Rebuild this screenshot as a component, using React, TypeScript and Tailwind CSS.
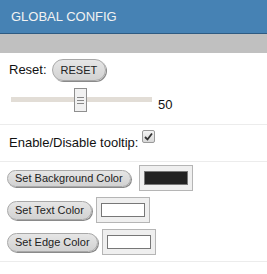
import React, { useState } from "react";

const font = { fontFamily: '"Liberation Sans", Arial, sans-serif' };

const PillButton: React.FC<{ label: string; className?: string }> = ({ label, className }) => (
  <button
    className={`rounded-full border border-[#a8a8a8] bg-gradient-to-b from-[#e6e6e6] to-[#d2d2d2] px-[7px] text-[11px] leading-none text-[#222] shadow-[1px_1px_0_#8a8a8a] ${className ?? ""}`}
  >
    {label}
  </button>
);

const ColorBox: React.FC<{ color: string }> = ({ color }) => (
  <div className="flex h-[26px] w-[54px] items-center justify-center border border-[#b5b5b5] bg-[#efefef]">
    <div className="h-[14px] w-[44px] border border-[#777]" style={{ background: color }} />
  </div>
);

const App: React.FC = () => {
  const [value] = useState(50);

  return (
    <div className="h-[274px] w-[267px] overflow-hidden bg-white text-[#111]" style={font}>
      {/* Header */}
      <div className="flex h-[34px] items-center border-b border-[#2e5b82] bg-[#4682b4] pl-[11px] text-[13px] text-[#f2f2f2]">
        GLOBAL CONFIG
      </div>
      <div className="h-[19px] bg-[#c0c0c0]" />

      {/* Reset */}
      <div className="flex h-[22px] items-center mt-[6px] pl-[9px] text-[13px]">
        <span>Reset:</span>
        <PillButton label="RESET" className="ml-[5px] h-[22px] px-[8px]" />
      </div>

      {/* Slider */}
      <div className="flex items-end pl-[11px] mt-[6px] h-[25px]">
        <div className="relative h-[24px] w-[141px]">
          <div className="absolute left-0 right-0 top-[9px] h-[5px] bg-[#e2ddd6]" />
          <div className="absolute left-[63px] top-0 flex h-[24px] w-[13px] flex-col items-center justify-center gap-[2px] border border-[#8f8f8f] bg-[#f1f1f1]">
            <div className="h-px w-[7px] bg-[#888]" />
            <div className="h-px w-[7px] bg-[#888]" />
            <div className="h-px w-[7px] bg-[#888]" />
          </div>
        </div>
        <span className="ml-[6px] text-[13px] leading-none mb-[1px]">{value}</span>
      </div>

      <div className="mt-[12px] h-px bg-[#ececec]" />

      {/* Tooltip toggle */}
      <div className="flex h-[36px] items-end pb-[9px] pl-[9px] text-[13px]">
        <span>Enable/Disable tooltip:</span>
        <div className="mb-[9px] ml-[4px] flex h-[13px] w-[13px] items-center justify-center rounded-[2px] border border-[#9a9a9a] bg-gradient-to-b from-[#f4f4f4] to-[#d8d8d8]">
          <svg width="9" height="9" viewBox="0 0 9 9">
            <path d="M1 5 L3.5 7.5 L8 1.5" stroke="#333" strokeWidth="1.8" fill="none" />
          </svg>
        </div>
      </div>

      <div className="h-px bg-[#ececec]" />

      {/* Colors */}
      <div className="flex flex-col gap-[6px] pl-[7px] pt-[3px]">
        <div className="flex items-center gap-[8px]">
          <PillButton label="Set Background Color" className="h-[17px]" />
          <ColorBox color="#222222" />
        </div>
        <div className="flex items-center gap-[4px]">
          <PillButton label="Set Text Color" className="h-[19px]" />
          <ColorBox color="#ffffff" />
        </div>
        <div className="flex items-center gap-[4px]">
          <PillButton label="Set Edge Color" className="h-[19px]" />
          <ColorBox color="#ffffff" />
        </div>
      </div>

      <div className="mt-[6px] h-px bg-[#ececec]" />
    </div>
  );
};

export default App;
